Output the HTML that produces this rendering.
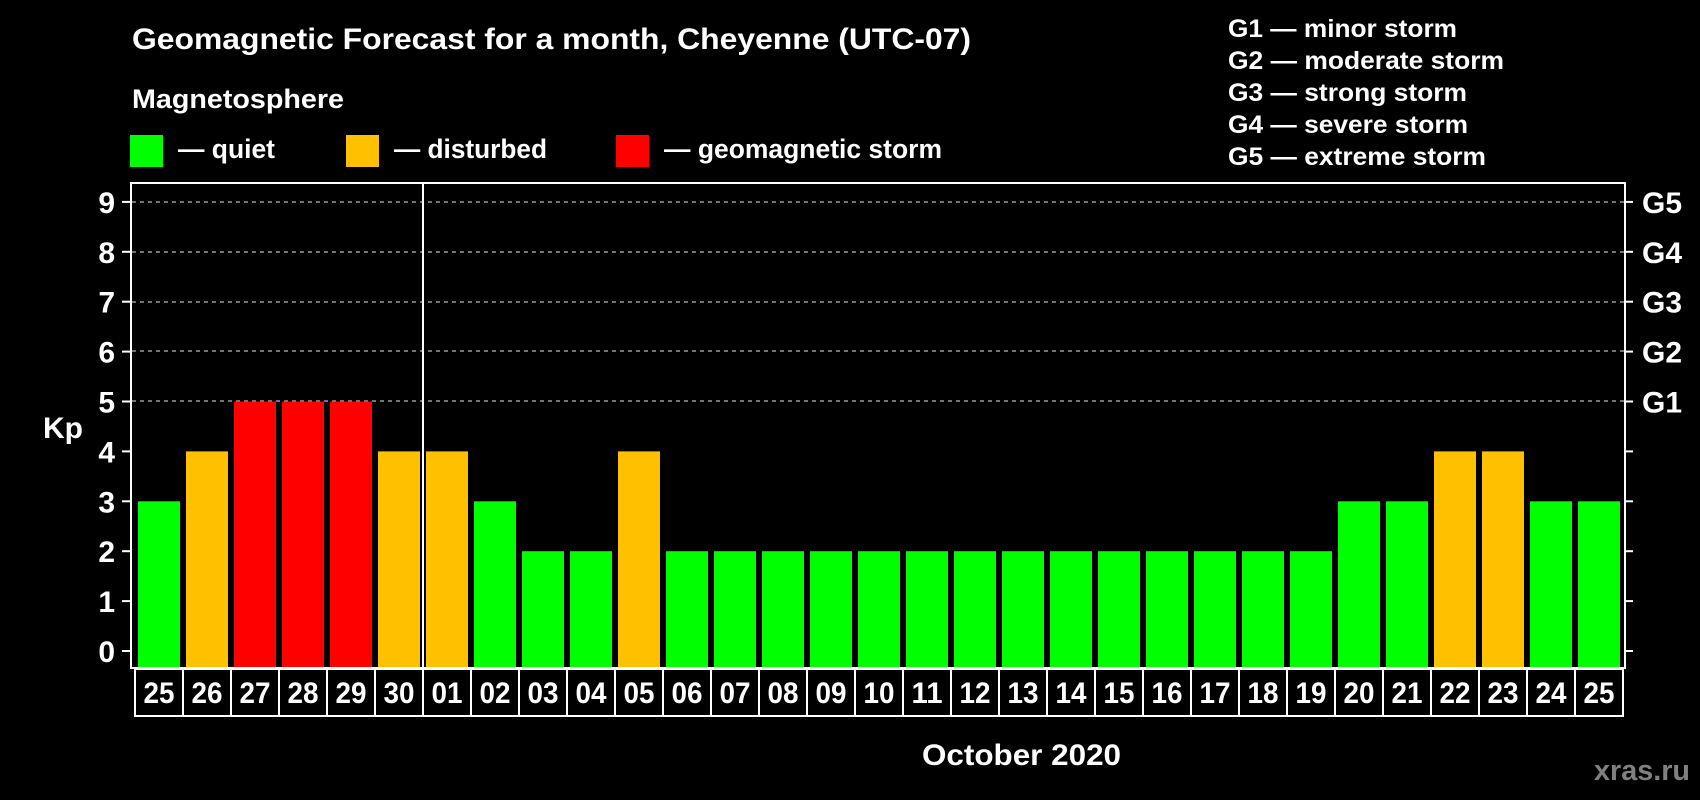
<!DOCTYPE html>
<html><head><meta charset="utf-8"><style>
html,body{margin:0;padding:0;background:#000;width:1700px;height:800px;overflow:hidden}
svg{display:block}
text{font-family:"Liberation Sans",Arial,sans-serif;font-weight:bold;fill:#fff}
</style></head><body>
<svg width="1700" height="800" viewBox="0 0 1700 800" xmlns="http://www.w3.org/2000/svg">
<rect width="1700" height="800" fill="#000"/>
<text x="132" y="49" font-size="30" textLength="839" lengthAdjust="spacingAndGlyphs">Geomagnetic Forecast for a month, Cheyenne (UTC-07)</text>
<text x="132" y="108" font-size="27" textLength="212" lengthAdjust="spacingAndGlyphs">Magnetosphere</text>
<rect x="130" y="135" width="33" height="32" fill="#00ff00"/>
<text x="178" y="158" font-size="27" textLength="97" lengthAdjust="spacingAndGlyphs">— quiet</text>
<rect x="346" y="135" width="33" height="32" fill="#ffc000"/>
<text x="394" y="158" font-size="27" textLength="153" lengthAdjust="spacingAndGlyphs">— disturbed</text>
<rect x="616" y="135" width="33" height="32" fill="#ff0000"/>
<text x="664" y="158" font-size="27" textLength="278" lengthAdjust="spacingAndGlyphs">— geomagnetic storm</text>
<g font-size="25">
<text x="1228" y="37" textLength="229" lengthAdjust="spacingAndGlyphs">G1 — minor storm</text>
<text x="1228" y="69" textLength="276" lengthAdjust="spacingAndGlyphs">G2 — moderate storm</text>
<text x="1228" y="101" textLength="239" lengthAdjust="spacingAndGlyphs">G3 — strong storm</text>
<text x="1228" y="133" textLength="240" lengthAdjust="spacingAndGlyphs">G4 — severe storm</text>
<text x="1228" y="165" textLength="258" lengthAdjust="spacingAndGlyphs">G5 — extreme storm</text>
</g>
<g stroke="#999" stroke-width="1.5" stroke-dasharray="4,4">
<line x1="132" y1="202" x2="1624" y2="202"/>
<line x1="132" y1="252" x2="1624" y2="252"/>
<line x1="132" y1="302" x2="1624" y2="302"/>
<line x1="132" y1="351" x2="1624" y2="351"/>
<line x1="132" y1="401" x2="1624" y2="401"/>
</g>
<g id="bars"></g>
<g stroke="#fff" stroke-width="2" fill="none">
<rect x="131" y="183" width="1494" height="485"/>
<line x1="423" y1="183" x2="423" y2="668"/>
</g>
<g id="ticks" stroke="#fff" stroke-width="2"></g>
<g id="ylab" font-size="30" text-anchor="end"></g>
<g id="glab" font-size="30"></g>
<text x="43" y="438" font-size="30">Kp</text>
<g id="dates" font-size="30" text-anchor="middle"></g>
<text x="922" y="765" font-size="30" textLength="199" lengthAdjust="spacingAndGlyphs">October 2020</text>
<text x="1594" y="780" font-size="29" style="fill:#808080" textLength="96" lengthAdjust="spacingAndGlyphs">xras.ru</text>
</svg>
<script>
var NS="http://www.w3.org/2000/svg";
function el(p,t,a,txt){var e=document.createElementNS(NS,t);for(var k in a)e.setAttribute(k,a[k]);if(txt!==undefined)e.textContent=txt;p.appendChild(e);return e;}
var vals=[3,4,5,5,5,4,4,3,2,2,4,2,2,2,2,2,2,2,2,2,2,2,2,2,2,3,3,4,4,3,3];
var days=["25","26","27","28","29","30","01","02","03","04","05","06","07","08","09","10","11","12","13","14","15","16","17","18","19","20","21","22","23","24","25"];
var col={2:"#00ff00",3:"#00ff00",4:"#ffc000",5:"#ff0000"};
var B=document.getElementById("bars"),D=document.getElementById("dates");
function Y(v){return 651-49.9*v;}
for(var i=0;i<31;i++){
 var x=138+48*i,t=Y(vals[i]);
 el(B,"rect",{x:x,y:t,width:42,height:667-t,fill:col[vals[i]]});
 el(D,"rect",{x:135+48*i,y:669,width:48,height:47,fill:"none",stroke:"#fff","stroke-width":2});
 el(D,"text",{x:159+48*i,y:703,textLength:31,lengthAdjust:"spacingAndGlyphs"},days[i]);
}
var T=document.getElementById("ticks"),YL=document.getElementById("ylab"),G=document.getElementById("glab");
for(var v=0;v<=9;v++){
 var y=Y(v);
 el(T,"line",{x1:122,y1:y,x2:131,y2:y});
 el(T,"line",{x1:1625,y1:y,x2:1633,y2:y});
 el(YL,"text",{x:115,y:y+11},String(v));
 if(v>=5)el(G,"text",{x:1642,y:y+11},"G"+(v-4));
}
</script>
</body></html>
